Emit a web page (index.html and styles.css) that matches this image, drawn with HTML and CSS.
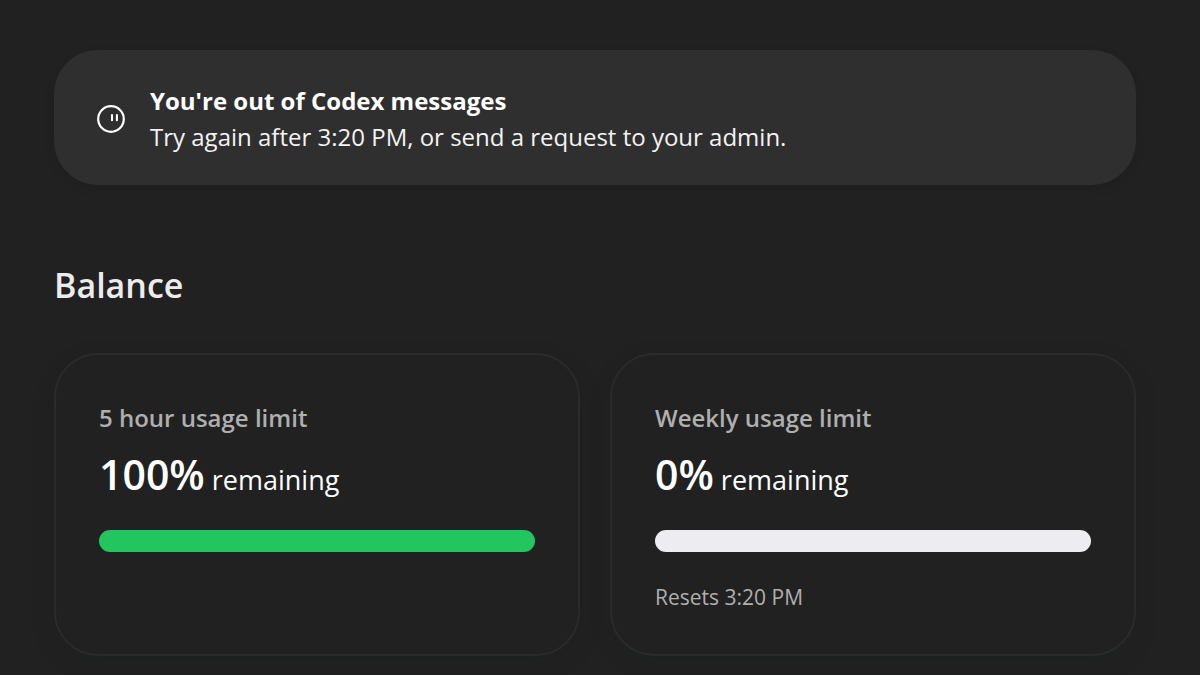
FILE: index.html
```html
<!DOCTYPE html>
<html lang="en">
<head>
<meta charset="utf-8">
<meta name="viewport" content="width=device-width, initial-scale=1">
<title>Codex usage</title>
<link rel="stylesheet" href="styles.css">
</head>
<body>
<main class="page">
  <section class="notice" role="status">
    <svg class="notice-icon" viewBox="0 0 28 28" fill="none" stroke="currentColor" aria-hidden="true">
      <circle cx="14" cy="14" r="12.8" stroke-width="2.2"/>
      <path d="M15 10v5.2M19.9 10v5.2" stroke-width="2.1" stroke-linecap="round"/>
    </svg>
    <div class="notice-text">
      <p class="notice-title">You're out of Codex messages</p>
      <p class="notice-body">Try again after 3:20 PM, or send a request to your admin.</p>
    </div>
  </section>

  <h1 class="heading">Balance</h1>

  <div class="cards">
    <section class="card">
      <h2 class="card-title" id="hourly">5 hour usage limit</h2>
      <p class="amount"><strong class="percent">100%</strong> remaining</p>
      <progress class="meter" value="100" max="100" aria-labelledby="hourly"></progress>
    </section>
    <section class="card">
      <h2 class="card-title" id="weekly">Weekly usage limit</h2>
      <p class="amount"><strong class="percent">0%</strong> remaining</p>
      <progress class="meter" value="0" max="100" aria-labelledby="weekly"></progress>
      <p class="resets">Resets 3:20 PM</p>
    </section>
  </div>
</main>
</body>
</html>
```
FILE: styles.css
```css
* {
  box-sizing: border-box;
}

body {
  margin: 0;
  background: #212121;
  color: #fff;
  font-family: "Segoe UI", "Open Sans", "Noto Sans", sans-serif;
}

h1, h2, p {
  margin: 0;
}

.page {
  padding: 50px 64px 19px 54px;
}

.notice {
  display: flex;
  align-items: center;
  gap: 25px;
  padding: 33px 43px 30px;
  border-radius: 44px;
  background: #2f2f2f;
  box-shadow: 0 4px 12px rgba(0, 0, 0, 0.08);
}

.notice-icon {
  flex: none;
  width: 28px;
  height: 28px;
}

.notice-text {
  font-size: 24px;
  line-height: 36px;
}

.notice-title {
  font-weight: 700;
}

.notice-body {
  color: #f3f3f3;
}

.heading {
  margin-top: 76px;
  color: #ececec;
  font-size: 34px;
  font-weight: 600;
  line-height: 48px;
}

.cards {
  display: grid;
  grid-template-columns: 1fr 1fr;
  gap: 30px;
  margin-top: 44px;
}

.card {
  padding: 43px 43px 41px;
  border: 2px solid #2b2b2b;
  border-radius: 44px;
  box-shadow: 0 8px 24px rgba(20, 26, 34, 0.14);
}

.card-title {
  color: #afafaf;
  font-size: 24px;
  font-weight: 600;
  line-height: 40px;
}

.amount {
  margin-top: 12px;
  font-size: 27px;
  line-height: 60px;
}

.percent {
  font-size: 41px;
  font-weight: 600;
  line-height: 1;
}

.meter {
  display: block;
  width: 100%;
  height: 22px;
  margin-top: 20px;
  overflow: hidden;
  border: 0;
  border-radius: 11px;
  background: #ececf1;
  appearance: none;
}

.meter::-webkit-progress-bar {
  background: #ececf1;
}

.meter::-webkit-progress-value {
  background: #22c55e;
}

.meter::-moz-progress-bar {
  background: #22c55e;
}

.resets {
  margin-top: 30px;
  color: #afafaf;
  font-size: 21px;
  line-height: 31px;
}
```
